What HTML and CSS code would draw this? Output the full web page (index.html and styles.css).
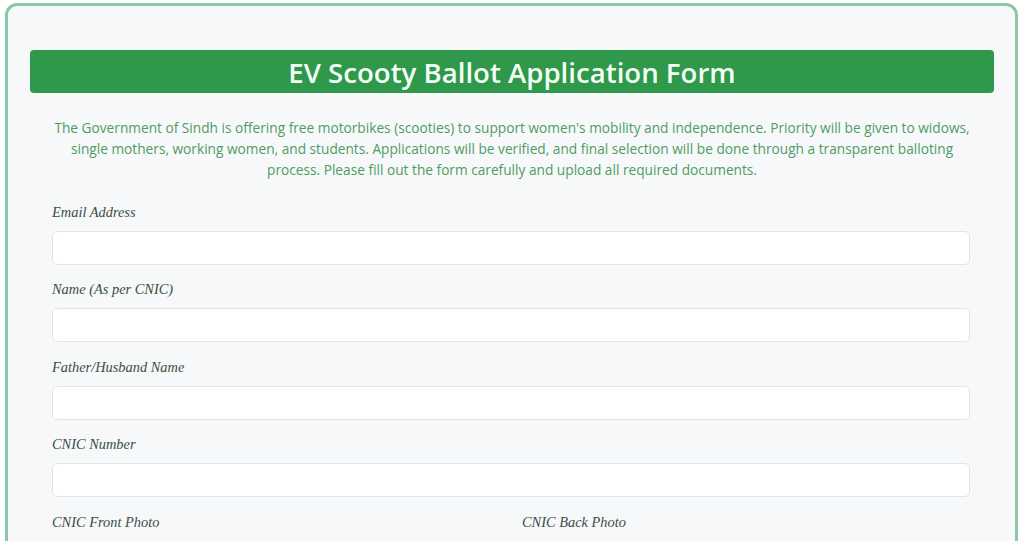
FILE: index.html
```html
<!DOCTYPE html>
<html lang="en">
<head>
<meta charset="utf-8">
<title>EV Scooty Ballot Application Form</title>
<link rel="stylesheet" href="styles.css">
</head>
<body>
<div class="card">
  <h1 class="banner">EV Scooty Ballot Application Form</h1>
  <p class="intro">The Government of Sindh is offering free motorbikes (scooties) to support women's mobility and independence. Priority will be given to widows, single mothers, working women, and students. Applications will be verified, and final selection will be done through a transparent balloting process. Please fill out the form carefully and upload all required documents.</p>
  <form class="form">
    <div class="field">
      <label class="label">Email Address</label>
      <input class="input" type="email">
    </div>
    <div class="field">
      <label class="label">Name (As per CNIC)</label>
      <input class="input" type="text">
    </div>
    <div class="field">
      <label class="label">Father/Husband Name</label>
      <input class="input" type="text">
    </div>
    <div class="field">
      <label class="label">CNIC Number</label>
      <input class="input" type="text">
    </div>
    <div class="row">
      <div class="field">
        <label class="label">CNIC Front Photo</label>
        <input class="input" type="text">
      </div>
      <div class="field">
        <label class="label">CNIC Back Photo</label>
        <input class="input" type="text">
      </div>
    </div>
  </form>
</div>
</body>
</html>
```

FILE: styles.css
```css
html, body {
  margin: 0;
  padding: 0;
  background: #ffffff;
}
body {
  font-family: "Open Sans", "Noto Sans", sans-serif;
}
.card {
  margin: 3px 6px 0 5px;
  border: 3px solid #8ec7a6;
  border-radius: 12px;
  background: #f7f8fa;
  padding: 44px 21px 40px 22px;
  min-height: 800px;
}
.banner {
  margin: 0;
  height: 43px;
  background: #2f984b;
  border-radius: 4px;
  color: #f2fff4;
  font-size: 27.6px;
  font-weight: 600;
  line-height: 45px;
  text-align: center;
}
.intro {
  margin: 24px 0 0 0;
  padding: 0 20px;
  color: #4f9c63;
  font-size: 13.7px;
  line-height: 21px;
  text-align: center;
}
.form {
  padding: 0 24px 0 22px;
  margin-top: 24px;
}
.field {
  display: flex;
  flex-direction: column;
  margin-bottom: 16.4px;
}
.label {
  font-family: "Liberation Serif", serif;
  font-style: italic;
  font-size: 14.4px;
  line-height: 17px;
  color: #3a4f45;
  margin-bottom: 10px;
}
.input {
  height: 34px;
  box-sizing: border-box;
  border: 1px solid #e2e5e8;
  border-radius: 5px;
  background: #ffffff;
  margin: 0;
}
.row {
  display: grid;
  grid-template-columns: 1fr 1fr;
  gap: 22px;
}
```
